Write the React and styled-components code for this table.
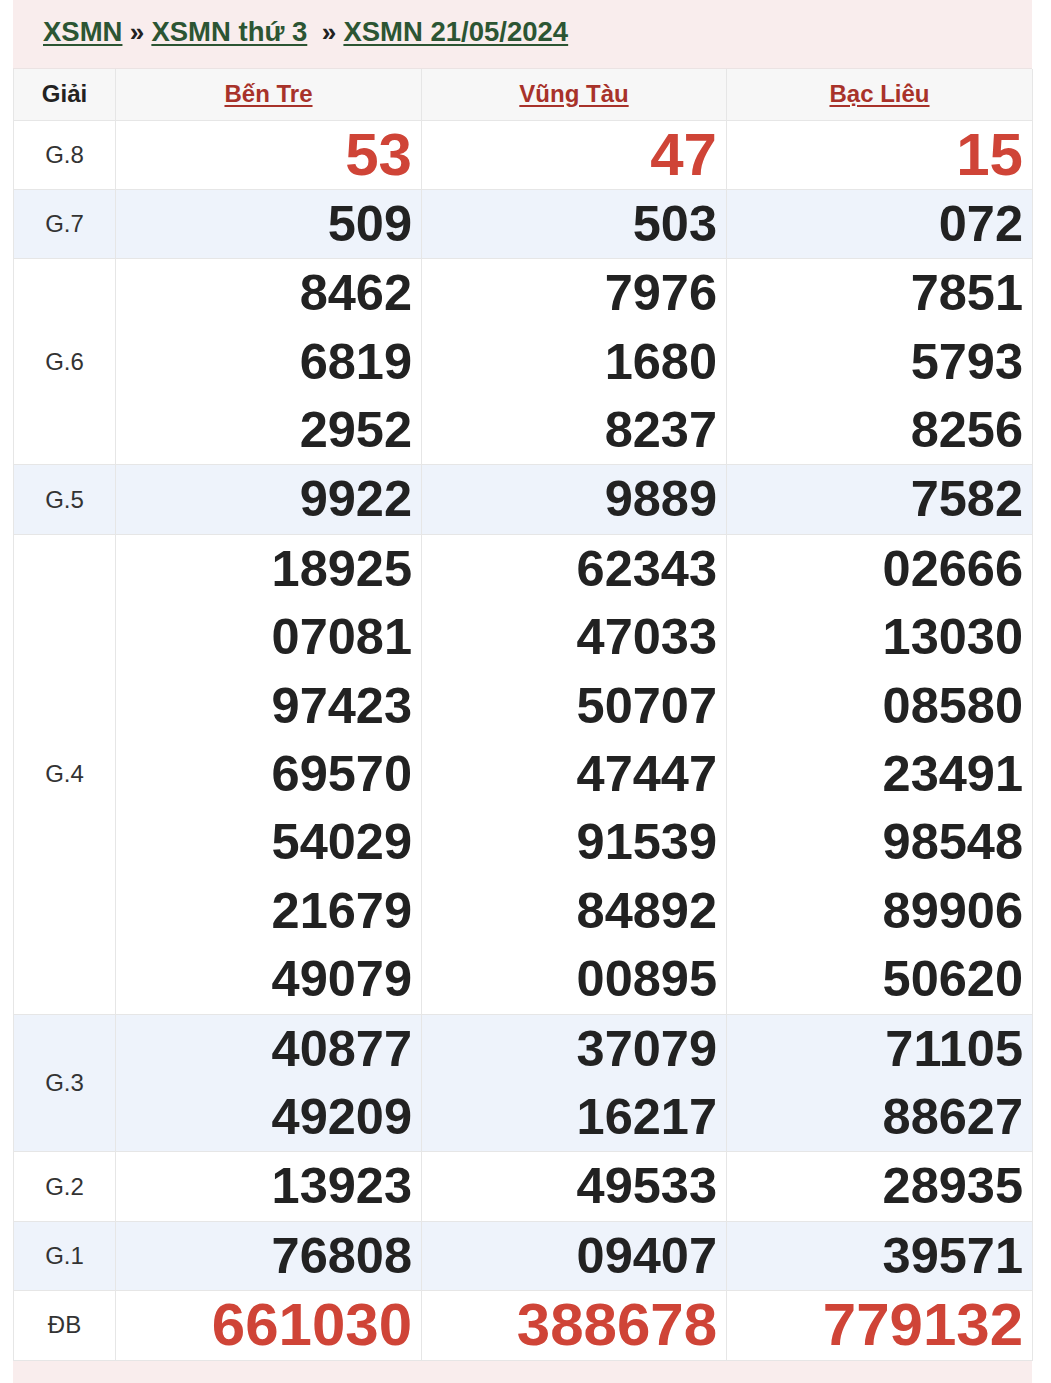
import React from 'react'
import styled, { createGlobalStyle } from 'styled-components'

const GlobalStyle = createGlobalStyle`
  body {
    margin: 0;
    background: #fff;
    font-family: "Liberation Sans", Arial, sans-serif;
    color: #222;
  }
`

const Page = styled.div`
  width: 1019px;
  margin-left: 13px;
`

const Breadcrumb = styled.div`
  height: 69px;
  display: flex;
  align-items: center;
  padding-left: 30px;
  padding-bottom: 4px;
  box-sizing: border-box;
  background: #f9eded;
  border-bottom: 1px solid #ebe3e3;
  font-size: 27.5px;
  font-weight: bold;
  white-space: pre;
`

const Crumb = styled.a`
  color: #2c5533;
  text-decoration: underline;
  text-decoration-thickness: 2px;
  text-underline-offset: 3px;
`

const Sep = styled.span`
  color: #222;
  font-size: 26px;
`

const Table = styled.table`
  width: 1019px;
  table-layout: fixed;
  border-collapse: collapse;
`

const HeadRow = styled.tr`
  background: #f7f7f7;
  height: 51px;
`

const HeadCell = styled.th`
  border: 1px solid #e6e6e6;
  border-top: none;
  font-size: 24px;
  font-weight: bold;
  text-align: center;
  padding: 0 0 1px;
  color: #222;
`

const Province = styled.a`
  color: #a8322a;
  text-decoration: underline;
  text-decoration-thickness: 2px;
  text-underline-offset: 3px;
`

const Row = styled.tr`
  background: ${p => (p.$shade ? '#eef3fb' : '#fff')};
`

const Label = styled.td`
  border: 1px solid #e6e6e6;
  text-align: center;
  font-size: 24px;
  color: #333;
  padding: 0;
`

const NumCell = styled.td`
  border: 1px solid #e6e6e6;
  text-align: right;
  padding: 0 9px 0 0;
`

const Num = styled.div`
  height: 68.4px;
  line-height: 68.4px;
  font-weight: bold;
  font-size: ${p => (p.$big ? '60px' : '50.5px')};
  color: ${p => (p.$big ? '#cf4437' : '#222')};
`

const Footer = styled.div`
  background: #f9eded;
  height: 60px;
  padding: 20px 0 0 120px;
  box-sizing: border-box;
  font-size: 24px;
  font-weight: bold;
  color: #222;
`

const provinces = ['Bến Tre', 'Vũng Tàu', 'Bạc Liêu']

const prizes = [
  { label: 'G.8', big: true, vals: [['53'], ['47'], ['15']] },
  { label: 'G.7', shade: true, vals: [['509'], ['503'], ['072']] },
  {
    label: 'G.6',
    vals: [
      ['8462', '6819', '2952'],
      ['7976', '1680', '8237'],
      ['7851', '5793', '8256'],
    ],
  },
  { label: 'G.5', shade: true, vals: [['9922'], ['9889'], ['7582']] },
  {
    label: 'G.4',
    vals: [
      ['18925', '07081', '97423', '69570', '54029', '21679', '49079'],
      ['62343', '47033', '50707', '47447', '91539', '84892', '00895'],
      ['02666', '13030', '08580', '23491', '98548', '89906', '50620'],
    ],
  },
  {
    label: 'G.3',
    shade: true,
    vals: [
      ['40877', '49209'],
      ['37079', '16217'],
      ['71105', '88627'],
    ],
  },
  { label: 'G.2', vals: [['13923'], ['49533'], ['28935']] },
  { label: 'G.1', shade: true, vals: [['76808'], ['09407'], ['39571']] },
  { label: 'ĐB', big: true, vals: [['661030'], ['388678'], ['779132']] },
]

const App = () => (
  <>
    <GlobalStyle />
    <Page>
      <Breadcrumb>
        <Crumb href="#">XSMN</Crumb>
        <Sep> » </Sep>
        <Crumb href="#">XSMN thứ 3</Crumb>
        <Sep>  » </Sep>
        <Crumb href="#">XSMN 21/05/2024</Crumb>
      </Breadcrumb>
      <Table>
        <colgroup>
          <col style={{ width: 102 }} />
          <col style={{ width: 306 }} />
          <col style={{ width: 305 }} />
          <col style={{ width: 306 }} />
        </colgroup>
        <thead>
          <HeadRow>
            <HeadCell>Giải</HeadCell>
            {provinces.map(p => (
              <HeadCell key={p}>
                <Province href="#">{p}</Province>
              </HeadCell>
            ))}
          </HeadRow>
        </thead>
        <tbody>
          {prizes.map(prize => (
            <Row key={prize.label} $shade={prize.shade}>
              <Label>{prize.label}</Label>
              {prize.vals.map((col, i) => (
                <NumCell key={i}>
                  {col.map(n => (
                    <Num key={n} $big={prize.big}>
                      {n}
                    </Num>
                  ))}
                </NumCell>
              ))}
            </Row>
          ))}
        </tbody>
      </Table>
      <Footer>Lô tô miền Nam thứ 3</Footer>
    </Page>
  </>
)

export default App
